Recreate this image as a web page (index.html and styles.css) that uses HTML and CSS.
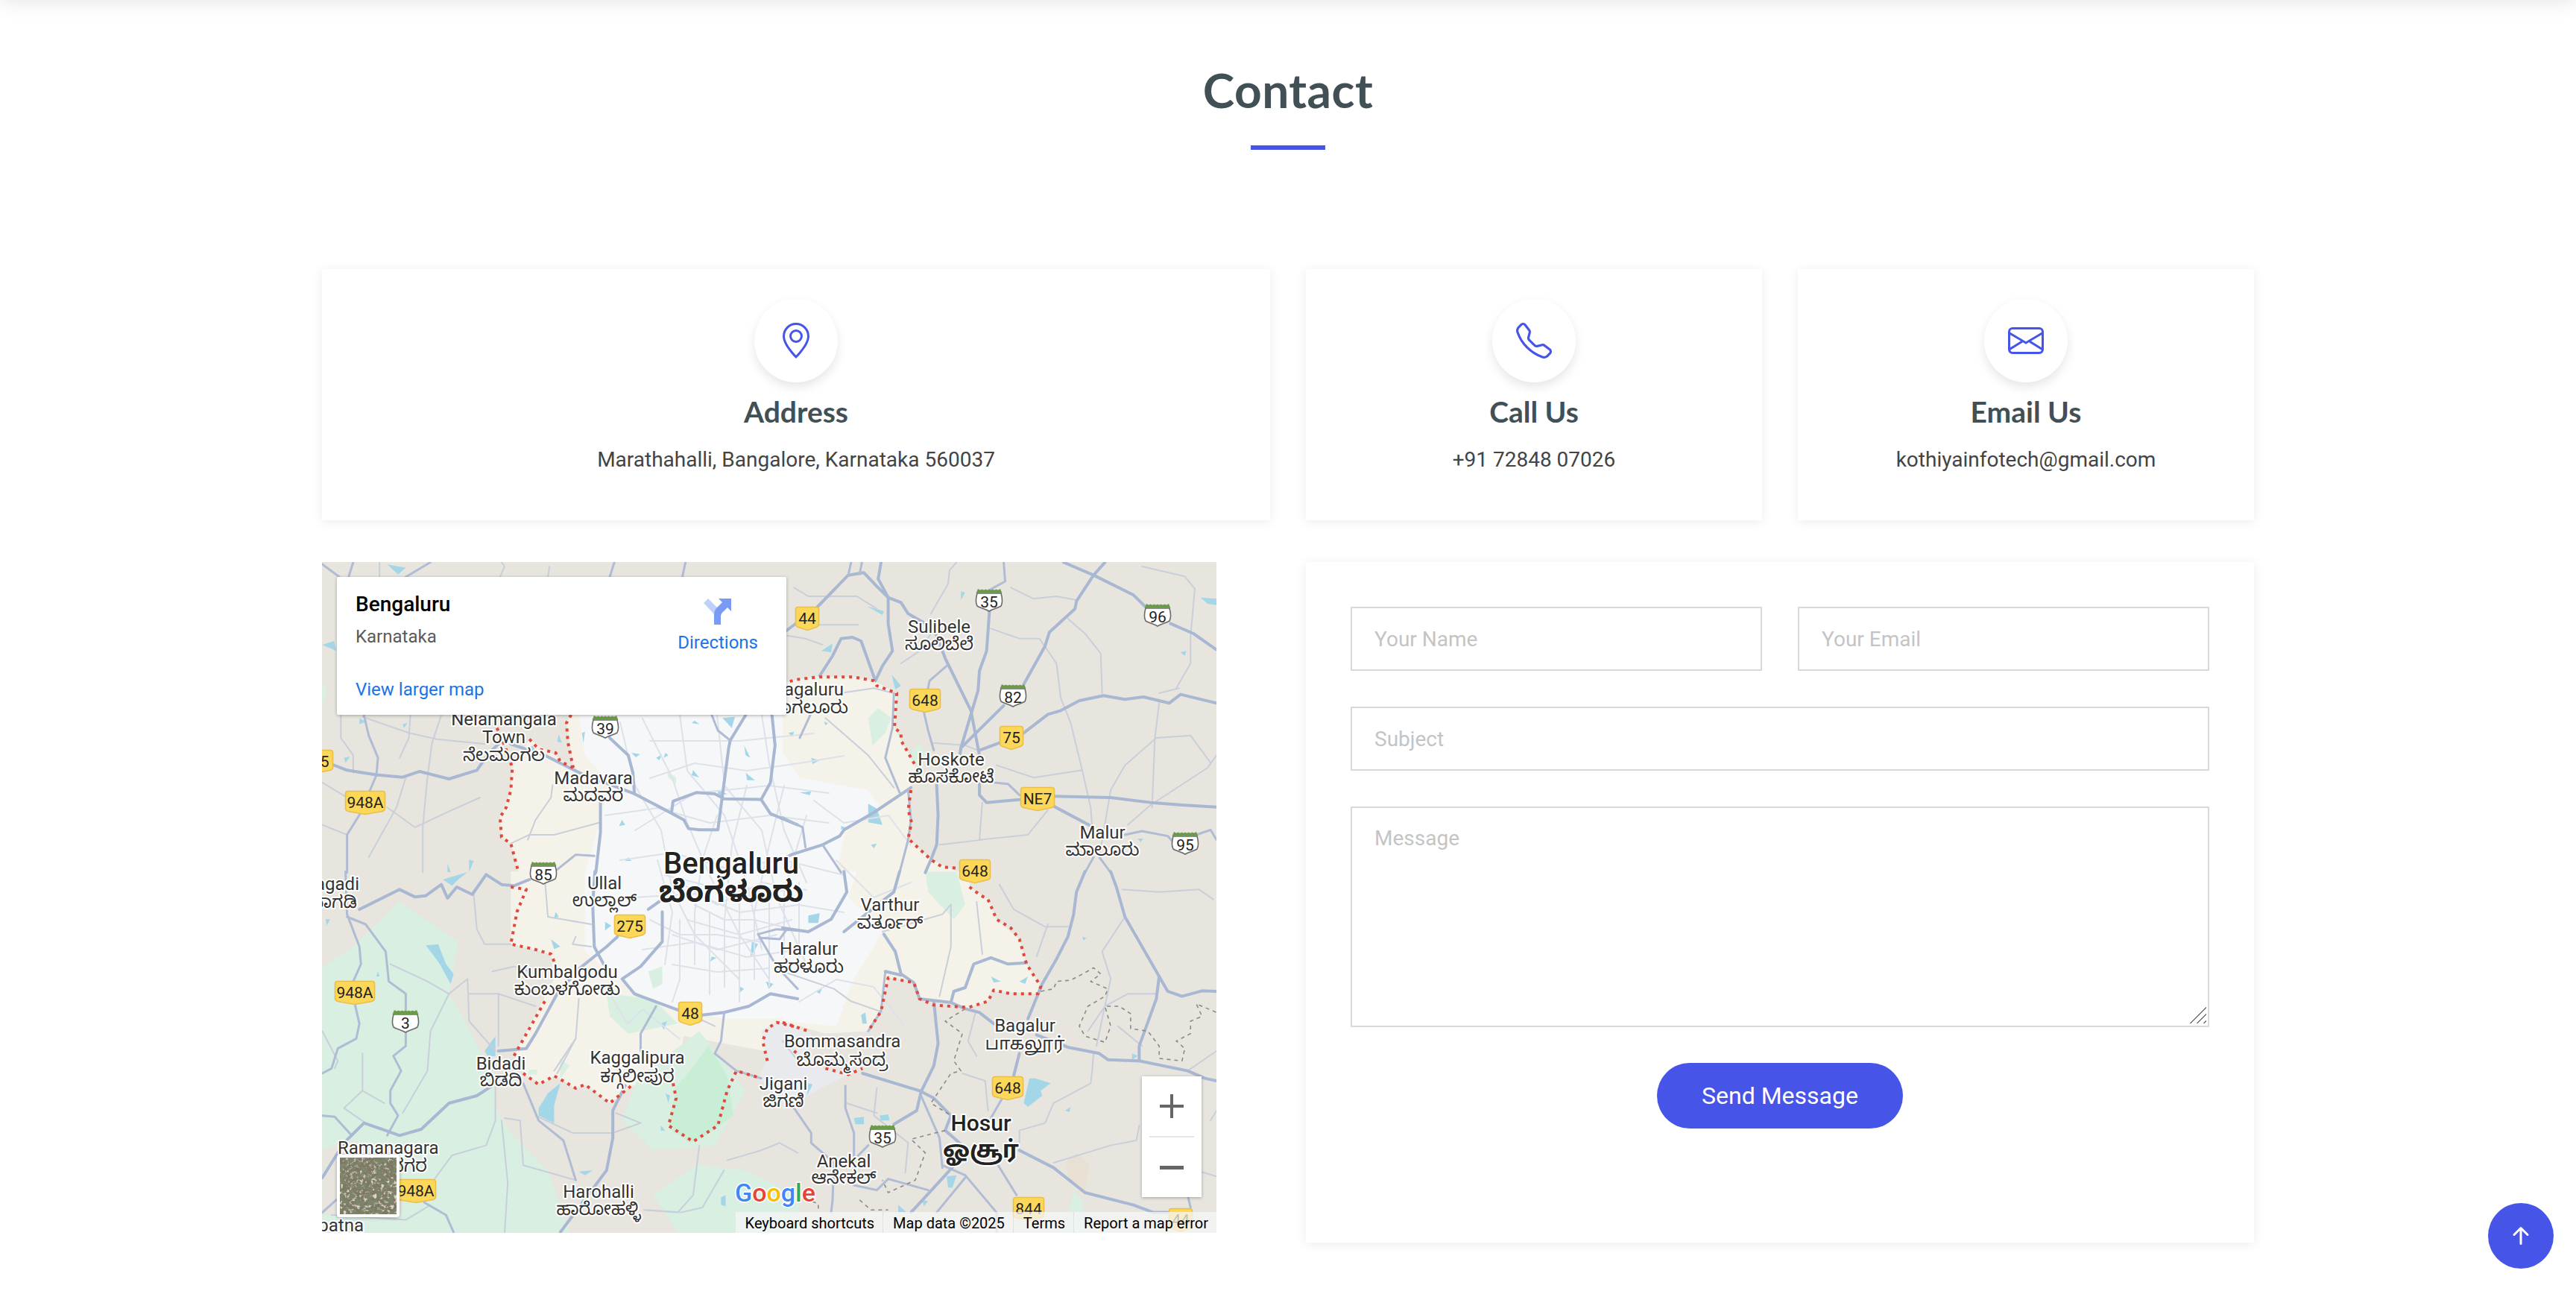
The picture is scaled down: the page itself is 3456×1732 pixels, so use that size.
FILE: index.html
```html
<!DOCTYPE html>
<html lang="en">
<head>
    <meta charset="UTF-8">
    <title>Contact</title>
    <link rel="stylesheet" href="styles.css">
</head>
<body>
    <div class="topbar"></div>
    <section class="contact">
        <div class="section-title">
            <h2>Contact</h2>
        </div>
        <div class="info-row">
            <div class="info-box">
                <div class="icon-circle">
                    <svg width="48" height="48" viewBox="0 0 16 16" fill="currentColor"><path d="M12.166 8.94c-.524 1.062-1.234 2.12-1.96 3.07A31.493 31.493 0 0 1 8 14.58a31.481 31.481 0 0 1-2.206-2.57c-.726-.95-1.436-2.008-1.96-3.07C3.304 7.867 3 6.862 3 6a5 5 0 0 1 10 0c0 .862-.305 1.867-.834 2.94zM8 16s6-5.686 6-10A6 6 0 0 0 2 6c0 4.314 6 10 6 10z"/><path d="M8 8a2 2 0 1 1 0-4 2 2 0 0 1 0 4zm0 1a3 3 0 1 0 0-6 3 3 0 0 0 0 6z"/></svg>
                </div>
                <h3>Address</h3>
                <p>Marathahalli, Bangalore, Karnataka 560037</p>
            </div>
            <div class="info-box">
                <div class="icon-circle">
                    <svg width="48" height="48" viewBox="0 0 16 16" fill="currentColor"><path d="M3.654 1.328a.678.678 0 0 0-1.015-.063L1.605 2.3c-.483.484-.661 1.169-.45 1.77a17.568 17.568 0 0 0 4.168 6.608 17.569 17.569 0 0 0 6.608 4.168c.601.211 1.286.033 1.77-.45l1.034-1.034a.678.678 0 0 0-.063-1.015l-2.307-1.794a.678.678 0 0 0-.58-.122l-2.19.547a1.745 1.745 0 0 1-1.657-.459L5.482 8.062a1.745 1.745 0 0 1-.46-1.657l.548-2.19a.678.678 0 0 0-.122-.58L3.654 1.328zM1.884.511a1.745 1.745 0 0 1 2.612.163L6.29 2.98c.329.423.445.974.315 1.494l-.547 2.19a.678.678 0 0 0 .178.643l2.457 2.457a.678.678 0 0 0 .644.178l2.189-.547a1.745 1.745 0 0 1 1.494.315l2.306 1.794c.829.645.905 1.87.163 2.611l-1.034 1.034c-.74.74-1.846 1.065-2.877.702a18.634 18.634 0 0 1-7.01-4.42 18.634 18.634 0 0 1-4.42-7.009c-.362-1.03-.037-2.137.703-2.877L1.885.511z"/></svg>
                </div>
                <h3>Call Us</h3>
                <p>+91 72848 07026</p>
            </div>
            <div class="info-box">
                <div class="icon-circle">
                    <svg width="48" height="48" viewBox="0 0 16 16" fill="currentColor"><path d="M0 4a2 2 0 0 1 2-2h12a2 2 0 0 1 2 2v8a2 2 0 0 1-2 2H2a2 2 0 0 1-2-2V4Zm2-1a1 1 0 0 0-1 1v.217l7 4.2 7-4.2V4a1 1 0 0 0-1-1H2Zm13 2.383-4.708 2.825L15 11.105V5.383Zm-.034 6.876-5.64-3.471L8 9.583l-1.326-.795-5.64 3.47A1 1 0 0 0 2 13h12a1 1 0 0 0 .966-.741ZM1 11.105l4.708-2.897L1 5.383v5.722Z"/></svg>
                </div>
                <h3>Email Us</h3>
                <p>kothiyainfotech@gmail.com</p>
            </div>
        </div>

        <div class="lower-row">
            <!-- Map -->
            <div class="map">
                <svg class="map-canvas" width="1200" height="900" viewBox="0 0 1200 900">
                    <defs>
                        <path id="sh2" d="M-12-15.5H12Q15.5-15.5 15.5-12V8Q15.5 10 12 11.5L0 15.5-12 11.5Q-15.5 10-15.5 8V-12Q-15.5-15.5-12-15.5Z"/>
                        <path id="sh3" d="M-17-15.5H17Q20.5-15.5 20.5-12V8Q20.5 10 17 11.5L0 15.5-17 11.5Q-20.5 10-20.5 8V-12Q-20.5-15.5-17-15.5Z"/>
                        <path id="sh4" d="M-19-15.5H19Q22.5-15.5 22.5-12V8Q22.5 10 19 11.5L0 15.5-19 11.5Q-22.5 10-22.5 8V-12Q-22.5-15.5-19-15.5Z"/>
                        <path id="sh5" d="M-23-15.5H23Q26.5-15.5 26.5-12V8Q26.5 10 23 11.5L0 15.5-23 11.5Q-26.5 10-26.5 8V-12Q-26.5-15.5-23-15.5Z"/>
                        <g id="shw">
                            <path fill="#fff" stroke="#6b6b6b" stroke-width="1.6" d="M-16-9H16C18-2 18.5 3 16 8 12 11 5 11.500 0 15 -5 11.500-12 11-16 8-18.500 3-18-2-16-9Z"/>
                            <path fill="#6b9a4a" d="M-17.500-9-15-15Q-12-12.500-9.500-14.500-7-12.500-4.500-14.500-2-12.500 0-14.500 2-12.500 4.500-14.500 7-12.500 9.500-14.500 12-12.500 15-15L17.500-9Z"/>
                        </g>
                    </defs>

                    <rect class="land" width="1200" height="900"/>

                    <!-- fills, top left -->
                    <g transform="translate(-12,-4) scale(.4146,.3333)">
                        <polygon class="cream" points="835,627 820,660 842,840 770,780 700,725 645,840 640,930 605,1040 610,1120 640,1145 665,1262 1568,1262 1568,627"/>
                        <polygon class="urban" points="860,627 880,790 960,900 930,1050 880,1262 1568,1262 1568,627"/>
                        <polygon class="park-light" points="30,500 45,520 40,570 30,580"/>
                        <polygon class="park-light" points="1145,855 1175,880 1175,905 1150,880"/>
                        <path class="water" d="M240 22 300 35 275 62ZM30 345 75 370 68 330ZM150 640 170 655 150 665ZM290 665 305 660 295 680ZM100 800 120 795 105 820ZM795 705 805 740 790 735ZM870 700 880 695 875 740ZM505 1210 520 1215 505 1260ZM435 1225 445 1260 435 1260ZM1030 780 1058 785 1045 798ZM1110 800 1130 785 1120 810ZM1235 650 1250 665 1225 660ZM1325 640 1365 635 1355 680ZM1395 750 1415 800 1400 790ZM1230 850 1250 880 1225 870ZM1400 860 1430 890 1405 890ZM1310 930 1340 945 1310 955ZM1000 1050 1010 1070 990 1075ZM1140 780 1150 790 1135 800ZM710 750 720 770 700 765ZM1020 1200 1030 1215 1010 1215Z"/>
                    </g>
                    <!-- fills, top right -->
                    <g transform="translate(618,-4) scale(.3827,.3333)">
                        <polygon class="cream" points="0,500 50,485 120,472 250,475 320,490 400,540 392,680 415,730 465,830 450,930 440,1010 452,1060 440,1125 520,1210 620,1262 0,1262"/>
                        <polygon class="urban" points="0,780 60,880 200,910 300,930 350,1010 220,1090 190,1262 0,1262"/>
                        <polygon class="park-light" points="300,640 335,600 380,640 360,700 315,750"/>
                        <polygon class="park-light" points="445,790 480,740 505,790 470,830"/>
                        <path class="water" d="M295 190 355 210 350 225ZM135 370 175 340 170 375ZM382 465 415 510 395 525ZM625 130 640 135 625 165ZM1465 155 1521 160 1521 185 1490 180ZM1395 375 1415 370 1410 390ZM145 655 160 660 150 670ZM20 700 40 695 35 715ZM100 800 130 810 105 825ZM60 940 100 935 95 950ZM300 985 330 1005 350 1070 300 1060ZM205 1075 220 1080 205 1090ZM310 1150 330 1145 320 1165ZM1245 1125 1265 1125 1255 1140Z"/>
                    </g>
                    <!-- fills, bottom left -->
                    <g transform="translate(-12,416) scale(.4146,.3333)">
                        <polygon class="park-light" points="30,380 130,300 280,120 470,280 440,490 500,620 540,720 590,860 590,950 640,1050 760,1200 830,1450 30,1450"/>
                        <polygon class="park-light" points="1100,1300 1240,1180 1400,1200 1568,1300 1568,1450 1180,1450"/>
                        <polygon class="land" points="30,1120 120,1080 250,1110 300,1290 280,1380 30,1380"/>
                        <polygon class="cream" points="640,-2 640,290 770,330 780,430 650,740 680,810 740,855 780,820 850,870 880,855 960,930 1030,860 1170,850 1200,660 1460,720 1568,620 1568,-2"/>
                        <polygon class="urban" points="880,-2 880,320 1000,440 1100,530 1330,590 1480,590 1568,580 1568,-2"/>
                        <polygon class="park-light" points="950,490 1100,510 1180,610 1020,650 960,580"/>
                        <polygon class="park-light" points="1050,830 1250,640 1400,880 1300,1100 1100,1120 1000,1000"/>
                        <polygon class="park" points="1170,870 1220,800 1280,700 1340,820 1360,980 1270,1060 1220,1090 1150,1030 1170,900"/>
                        <polygon class="grey-zone" points="1450,640 1500,600 1568,620 1568,960 1440,830 1470,750"/>
                        <polygon class="park-light" points="1085,400 1130,380 1130,450 1100,470"/>
                        <polygon class="park-light" points="800,750 830,780 800,830"/>
                        <polygon class="park-light" points="700,795 725,795 725,815 695,815"/>
                        <path class="water" d="M420 30 500 0 470 30 450 55ZM40 190 55 190 45 215ZM365 295 405 290 430 370 455 410 445 450 410 370ZM210 400 215 420 205 420ZM555 720 590 660 590 740 565 740ZM770 270 800 300 780 310ZM730 950 760 890 800 850 780 940 780 1010 730 980ZM860 1205 905 1200 880 1220ZM1125 610 1145 600 1135 635ZM1320 1310 1335 1300 1335 1345 1320 1340ZM1420 280 1440 290 1415 345ZM1290 340 1305 345 1285 360ZM1380 460 1395 470 1380 485ZM1465 440 1490 450 1475 470ZM945 200 965 215 945 235ZM785 160 795 180 780 185ZM1140 890 1155 900 1150 930ZM1125 1020 1140 1040 1125 1040Z"/>
                    </g>
                    <!-- fills, bottom right -->
                    <g transform="translate(618,416) scale(.3827,.3333)">
                        <polygon class="cream" points="0,-2 655,-2 655,60 720,110 750,190 830,270 855,370 905,460 895,490 730,480 720,520 650,545 480,510 460,440 370,425 340,560 300,640 150,650 0,600"/>
                        <polygon class="urban" points="0,-2 260,-2 230,100 350,240 240,450 190,620 0,600"/>
                        <polygon class="park-light" points="500,-2 610,-2 640,130 600,190 510,80"/>
                        <polygon class="grey-zone" points="0,600 100,650 90,720 140,790 230,815 150,860 0,960"/>
                        <polygon class="tan" points="990,1170 1030,1130 1075,1180 1060,1290 1010,1250"/>
                        <polygon class="park-light" points="990,1450 1020,1285 1050,1320 1060,1450"/>
                        <polygon class="park-light" points="0,1330 60,1340 40,1450 0,1450"/>
                        <path class="water" d="M90 175 130 165 125 205 90 205ZM115 480 140 465 130 490ZM275 575 290 565 295 610 280 610ZM730 420 765 440 740 445ZM830 440 860 420 850 450ZM865 830 885 830 940 850 905 880 910 900 860 945 845 930ZM1050 260 1065 265 1055 275ZM990 960 1010 945 1005 965ZM250 990 285 985 285 1015 255 1015ZM340 980 370 975 375 1000 345 1000ZM20 380 35 390 20 400ZM575 1225 610 1220 595 1270 580 1270ZM405 1340 435 1370 405 1370ZM490 1320 510 1325 495 1345ZM90 850 105 855 85 900ZM1225 730 1245 740 1225 755Z"/>
                    </g>

                    <!-- city street lines -->
                    <g class="st">
                        <polyline points="400,215 420,300 455,360 470,440 500,500 560,560"/>
                        <polyline points="430,210 470,290 490,350 520,420 560,500 600,560"/>
                        <polyline points="480,205 490,280 540,340 570,430 590,520"/>
                        <polyline points="530,205 540,300 590,360 610,450 650,540"/>
                        <polyline points="590,205 600,270 620,360 650,430"/>
                        <polyline points="380,340 450,330 520,350 600,340 680,350"/>
                        <polyline points="400,400 470,390 540,410 620,400 700,420"/>
                        <polyline points="420,450 500,445 560,470 640,460 700,470"/>
                        <polyline points="430,520 500,510 570,530 640,520"/>
                        <polyline points="440,290 500,270 570,280 640,270 700,260"/>
                        <polyline points="480,480 480,560 470,590"/>
                        <polyline points="520,470 520,580"/>
                        <polyline points="560,430 560,590"/>
                        <polyline points="600,440 600,570"/>
                        <polyline points="640,430 640,540"/>
                        <polyline points="460,420 500,430 540,440 580,450 620,440"/>
                        <polyline points="500,460 540,480 580,480 620,490"/>
                        <polyline points="440,480 480,500 530,500 590,510"/>
                        <polyline points="470,540 530,550 600,545"/>
                        <polyline points="660,320 700,350 760,340 790,380"/>
                        <polyline points="690,400 740,450 790,430"/>
                        <polyline points="640,590 690,560 740,570 780,620"/>
                        <polyline points="380,570 410,620 430,600 480,640"/>
                        <polyline points="440,240 560,240 660,230"/>
                        <polyline points="420,360 500,310 600,300 680,310"/>
                        <polyline points="500,540 500,470 510,400 530,340"/>
                        <polyline points="540,570 540,480 550,380 570,300"/>
                        <polyline points="580,560 580,470 600,380 620,300"/>
                        <polyline points="620,540 620,440 650,340"/>
                        <polyline points="460,540 470,470 450,400"/>
                        <polyline points="480,430 530,460 590,430 650,440"/>
                        <polyline points="470,500 530,520 610,500"/>
                        <polyline points="490,480 560,500 630,480"/>
                    </g>

                    <!-- minor roads, top left -->
                    <g class="q" transform="translate(-12,-4) scale(.4146,.3333)">
                        <polyline class="r3" points="215,13 215,72"/>
                        <polyline class="r3" points="605,72 620,30 610,13"/>
                        <polyline class="r3" points="760,72 765,30"/>
                        <polyline class="r3" points="90,630 90,720 130,790 130,860"/>
                        <polyline class="r3" points="160,635 310,700 400,725 560,745"/>
                        <polyline class="r3" points="315,628 310,720 280,800"/>
                        <polyline class="r3" points="415,628 385,740 370,880 355,1080 355,1262"/>
                        <polyline class="r3" points="30,900 110,960"/>
                        <polyline class="r3" points="240,1000 330,1080 450,1010 540,960"/>
                        <polyline class="r3" points="30,1070 110,1110"/>
                        <polyline class="r3" points="300,880 270,1000 180,1200"/>
                        <polyline class="r3" points="930,1060 780,1110 700,1110 640,1145"/>
                        <polyline class="r3" points="775,910 770,960 720,1050 695,1130"/>
                    </g>
                    <!-- minor roads, top right -->
                    <g class="q" transform="translate(618,-4) scale(.3827,.3333)">
                        <polyline class="r3" points="610,13 585,45 580,100 520,220"/>
                        <polyline class="r3" points="730,280 830,320 900,320 960,420 975,560 1010,660 1050,850 1080,1000 1085,1080"/>
                        <polyline class="r3" points="1000,240 1060,300 1115,380 1120,540"/>
                        <polyline class="r3" points="800,115 880,160 960,150 1030,165"/>
                        <polyline class="r3" points="1260,30 1410,70 1445,120 1430,310 1430,420 1380,520"/>
                        <polyline class="r3" points="1320,580 1305,720 1295,1000"/>
                        <polyline class="r3" points="1310,720 1200,830 1150,930 1110,1200"/>
                        <polyline class="r3" points="1521,790 1490,840 1290,990 1210,1070"/>
                        <polyline class="r3" points="750,830 880,880 1050,850"/>
                        <polyline class="r3" points="700,980 690,1130 860,1110 930,1010"/>
                        <polyline class="r3" points="1310,720 1430,710 1500,820"/>
                        <polyline class="r3" points="130,265 265,265"/>
                        <polyline class="r3" points="40,115 90,150 260,150 330,200"/>
                        <polyline class="r3" points="0,305 80,320 140,345"/>
                        <polyline class="r3" points="530,740 640,750 685,770"/>
                        <polyline class="r3" points="415,420 480,370 520,300"/>
                        <polyline class="r3" points="150,640 300,790 390,920"/>
                        <polyline class="r3" points="200,540 320,520 390,540"/>
                        <polyline class="r3" points="550,1150 700,1130"/>
                        <polyline class="r3" points="1320,540 1390,520"/>
                    </g>
                    <!-- minor roads, bottom left -->
                    <g class="q" transform="translate(-12,416) scale(.4146,.3333)">
                        <polyline class="r3" points="250,370 370,440 440,490 380,640 370,800 290,970"/>
                        <polyline class="r3" points="440,490 500,430 505,600 590,720"/>
                        <polyline class="r3" points="505,490 600,490 720,540"/>
                        <polyline class="r3" points="580,400 650,380 700,400"/>
                        <polyline class="r3" points="600,490 600,700"/>
                        <polyline class="r3" points="590,860 590,1000 560,1100 450,1140 390,1240"/>
                        <polyline class="r3" points="620,990 670,1000 680,1180 850,1240"/>
                        <polyline class="r3" points="720,980 840,1050 970,1050 1060,1010 980,970"/>
                        <polyline class="r3" points="1250,1100 1230,1300 1180,1370 1070,1360"/>
                        <polyline class="r3" points="1340,1160 1450,1120 1510,1090 1568,1130"/>
                        <polyline class="r3" points="850,670 790,810"/>
                        <polyline class="r3" points="30,640 80,760 70,790"/>
                        <polyline class="r3" points="160,730 160,880 100,950 170,1010"/>
                        <polyline class="r3" points="230,930 160,880"/>
                        <polyline class="r3" points="520,90 530,230 555,290 640,290"/>
                        <polyline class="r3" points="750,30 760,180 900,210"/>
                        <polyline class="r3" points="850,260 840,290 900,300"/>
                        <polyline class="r3" points="610,1000 630,1250 620,1450"/>
                        <polyline class="r3" points="860,510 850,670 780,800"/>
                        <polyline class="r3" points="60,1380 300,1400 380,1340"/>
                        <polyline class="r3" points="1080,1360 1190,1370 1260,1350 1330,1200"/>
                        <polyline class="r3" points="1180,550 1300,620"/>
                    </g>
                    <!-- minor roads, bottom right -->
                    <g class="q" transform="translate(618,416) scale(.3827,.3333)">
                        <polyline class="r3" points="350,240 560,170 590,130 590,300 550,500"/>
                        <polyline class="r3" points="680,120 700,330"/>
                        <polyline class="r3" points="760,50 810,150 920,220 1000,220"/>
                        <polyline class="r3" points="930,210 890,340"/>
                        <polyline class="r3" points="1200,180 1120,320 1150,430 1100,700"/>
                        <polyline class="r3" points="1190,70 1320,80 1460,70 1510,110"/>
                        <polyline class="r3" points="1310,490 1210,490 1130,540 1070,640"/>
                        <polyline class="r3" points="1175,620 1260,700"/>
                        <polyline class="r3" points="1090,730 1085,800 1080,850 950,930 920,1010 830,1040 830,1110"/>
                        <polyline class="r3" points="630,810 710,840 720,960"/>
                        <polyline class="r3" points="1420,800 1521,720"/>
                        <polyline class="r3" points="675,570 650,680 680,740"/>
                        <polyline class="r3" points="1250,1020 1240,1080 1150,1100 950,1170"/>
                        <polyline class="r3" points="330,870 320,980 440,1090 430,1210"/>
                        <polyline class="r3" points="225,930 330,970"/>
                        <polyline class="r3" points="0,400 180,470 240,520 340,560"/>
                        <polyline class="r3" points="0,680 60,770"/>
                        <polyline class="r3" points="1450,1200 1521,1225"/>
                        <polyline class="r3" points="1500,1000 1521,960"/>
                    </g>

                    <!-- main roads, top left -->
                    <g class="q" transform="translate(-12,-4) scale(.4146,.3333)">
                        <polyline class="r2" points="29,20 85,72"/>
                        <polyline class="r2" points="130,13 115,72"/>
                        <polyline class="r2" points="380,13 300,72"/>
                        <polyline class="r2" points="975,13 960,72"/>
                        <polyline class="r2" points="1205,13 1195,72"/>
                        <polyline class="r2" points="165,630 180,710 210,800 205,870 150,1030 110,1110 110,1262"/>
                        <polyline class="r1" points="57,825 110,850 200,868 290,878 345,855 440,885 530,850 570,780 600,745"/>
                        <polyline class="r1" points="640,745 750,790 870,865 1040,945 1140,1010 1200,1050 1215,1085 1250,1090 1310,1090 1345,760 1350,730 1400,628"/>
                        <polyline class="r1" points="1160,1020 1165,975 1240,940 1300,945 1330,965 1450,968 1480,1025 1568,1070"/>
                        <polyline class="r1" points="1485,627 1495,750 1480,900 1450,968"/>
                        <polyline class="r2" points="1290,627 1310,690 1350,730"/>
                        <polyline class="r1" points="930,950 930,1100 915,1262"/>
                        <polyline class="r1" points="960,720 1020,790 1035,860 1040,945"/>
                        <polyline class="r2" points="790,1250 850,1190 910,1195"/>
                        <polyline class="red" points="835,627 820,660 825,740 842,840"/>
                        <polyline class="red" points="595,680 620,750 645,840 640,930 625,1000 605,1040 610,1120 640,1145 665,1262"/>
                        <polyline class="red" points="700,725 730,765 785,780 800,815 842,840"/>
                    </g>
                    <!-- main roads, top right -->
                    <g class="q" transform="translate(618,-4) scale(.3827,.3333)">
                        <polyline class="r1" points="0,300 120,195 230,65 285,55 330,110 370,155 415,175 440,220 530,280 570,400 660,610 690,790"/>
                        <polyline class="r2" points="240,13 230,65"/>
                        <polyline class="r2" points="278,13 270,60"/>
                        <polyline class="r1" points="345,13 335,80 370,155 370,260 385,370 350,430 325,490 275,330 245,315 205,320 175,390 130,470"/>
                        <polyline class="r2" points="775,13 780,90 725,125"/>
                        <polyline class="r1" points="725,210 715,370 690,450 685,530 625,760 620,800"/>
                        <polyline class="r1" points="985,13 1090,65 1230,145 1270,190"/>
                        <polyline class="r1" points="1360,260 1440,300 1521,365"/>
                        <polyline class="r1" points="1130,13 1090,65 1030,170 1025,200 935,295 920,350 845,505"/>
                        <polyline class="r1" points="775,590 625,760"/>
                        <polyline class="r2" points="575,430 515,490 510,520"/>
                        <polyline class="r2" points="495,615 510,690 530,770"/>
                        <polyline class="r1" points="690,770 760,740"/>
                        <polyline class="r1" points="845,700 930,625 975,610 1040,570 1125,550 1200,565 1265,555 1355,580 1395,545 1521,580"/>
                        <polyline class="r1" points="450,920 320,1020 215,1090 200,1115 140,1150 30,1190 0,1210"/>
                        <polyline class="r2" points="745,900 790,905 830,950"/>
                        <polyline class="r1" points="690,900 690,950 715,980 830,968"/>
                        <polyline class="r1" points="950,955 1150,960 1290,980 1400,990 1521,998"/>
                        <polyline class="r1" points="950,995 1090,1080"/>
                        <polyline class="r2" points="1200,1110 1260,1095 1350,1115 1370,1140"/>
                        <polyline class="r2" points="1450,1110 1500,1090 1521,1130"/>
                        <polyline class="r1" points="540,910 545,1030 540,1150 520,1210 500,1262"/>
                        <polyline class="r2" points="440,930 450,1050 440,1130 410,1262"/>
                        <polyline class="r2" points="0,1040 70,1080 80,1160"/>
                        <polyline class="r2" points="140,1150 205,1262"/>
                        <polyline class="r2" points="390,540 385,680 360,800 410,940"/>
                        <polyline class="r2" points="1090,1200 1060,1262"/>
                        <polyline class="r2" points="1110,1200 1150,1262"/>
                        <polyline class="r2" points="100,620 60,720"/>
                        <polyline class="red" points="0,500 50,485 120,475 250,475 320,490 330,510 400,540 392,680 415,700 415,730 465,830"/>
                        <polyline class="red" points="450,930 440,1010 452,1060 440,1125 520,1210 560,1240 620,1245"/>
                    </g>
                    <!-- main roads, bottom left -->
                    <g class="q" transform="translate(-12,416) scale(.4146,.3333)">
                        <polyline class="r2" points="105,-2 110,170 150,300 155,370 130,440"/>
                        <polyline class="r2" points="135,530 150,610 140,670 80,710 60,790 30,810"/>
                        <polyline class="r2" points="110,180 170,210 235,320 245,440 300,490 300,560"/>
                        <polyline class="r2" points="300,645 300,700 260,740 285,800 250,880 250,930 275,980 240,1060"/>
                        <polyline class="r1" points="150,150 280,70 330,100 365,95 415,50 435,105 465,60 515,90 560,10 610,50 650,55 700,30"/>
                        <polyline class="r2" points="30,980 70,985 125,1060"/>
                        <polyline class="r1" points="30,1230 100,1090 165,1010 280,1060 350,1035 440,930 530,900 580,860"/>
                        <polyline class="r1" points="600,720 690,710 720,650 790,490 860,390 950,300 985,260"/>
                        <polyline class="r1" points="912,-2 905,130 910,300 940,370"/>
                        <polyline class="r1" points="1130,160 1130,280 1060,380 1000,430 1040,490 1180,555"/>
                        <polyline class="r1" points="1085,150 1130,110"/>
                        <polyline class="r1" points="1260,575 1330,565 1410,540 1480,490 1568,510"/>
                        <polyline class="r2" points="1110,540 1060,650 1060,720"/>
                        <polyline class="r2" points="1330,570 1320,680 1300,730 1370,800 1450,830"/>
                        <polyline class="r2" points="1440,250 1500,380 1568,470"/>
                        <polyline class="r2" points="1440,250 1500,230 1568,235"/>
                        <polyline class="r2" points="1450,265 1510,270 1530,235"/>
                        <polyline class="r1" points="1010,860 970,960 970,1070 950,1200 800,1450"/>
                        <polyline class="r2" points="360,1330 430,1380 455,1450"/>
                        <polyline class="r2" points="680,850 730,1000 810,1080 850,1240"/>
                        <polyline class="r2" points="30,1370 75,1320"/>
                        <polyline class="red" points="640,60 690,70 660,160 640,290 715,310 770,330 780,360"/>
                        <polyline class="red" points="750,520 650,740"/>
                        <polyline class="red" points="680,810 730,855 780,820 850,870 880,855 960,930 1030,860"/>
                        <polyline class="red" points="1165,850 1175,910 1150,1020 1230,1085 1310,1020 1340,880 1370,800 1450,830"/>
                        <polyline class="red" points="1470,760 1455,680 1470,630 1500,605 1568,625"/>
                    </g>
                    <!-- main roads, bottom right -->
                    <g class="q" transform="translate(618,416) scale(.3827,.3333)">
                        <polyline class="r1" points="410,-2 390,80 215,240"/>
                        <polyline class="r1" points="215,-2 225,80 170,190 90,240 0,225"/>
                        <polyline class="r1" points="355,250 395,320 415,410 460,445 480,510 590,525 640,550 690,565 740,610"/>
                        <polyline class="r1" points="890,655 1000,705 1110,730 1140,755 1250,760 1420,800 1480,830 1521,840"/>
                        <polyline class="r2" points="360,400 345,560 300,640"/>
                        <polyline class="r1" points="360,400 415,415"/>
                        <polyline class="r1" points="590,525 600,480 640,465 670,370 730,345 790,370 855,365"/>
                        <polyline class="r1" points="1060,-2 1030,80 1020,170 1000,260 960,350 910,450 860,590"/>
                        <polyline class="r1" points="830,730 810,820"/>
                        <polyline class="r2" points="770,910 730,990"/>
                        <polyline class="r1" points="1150,-2 1170,60 1200,180 1260,300 1320,420 1310,510 1250,700 1250,760"/>
                        <polyline class="r1" points="1320,420 1350,480 1400,500 1470,478 1521,480"/>
                        <polyline class="r1" points="530,520 545,690 530,780 485,885 470,960 390,1015"/>
                        <polyline class="r2" points="485,900 550,1070 560,1190"/>
                        <polyline class="r1" points="280,810 480,880 530,910 590,980 570,1040 640,1110"/>
                        <polyline class="r2" points="40,950 100,1050 100,1090 180,1170 175,1320 170,1370"/>
                        <polyline class="r2" points="220,860 220,950 250,1050 250,1200"/>
                        <polyline class="r2" points="300,1100 240,1170"/>
                        <polyline class="r1" points="830,1120 950,1190 1060,1290 1230,1340 1300,1370 1350,1370"/>
                        <polyline class="r2" points="750,1170 820,1300"/>
                        <polyline class="r2" points="560,1180 640,1220 750,1370 750,1450"/>
                        <polyline class="r1" points="610,1170 450,1370"/>
                        <polyline class="r2" points="640,1230 540,1370"/>
                        <polyline class="r2" points="250,1260 330,1280 370,1235 510,1280"/>
                        <polyline class="r2" points="1420,1300 1430,1350"/>
                        <polyline class="red" points="655,60 690,90 720,110 750,190 800,225 830,270 855,370 905,460 895,490 800,490 740,475 720,520 650,545 530,535 480,510 460,445 370,425 345,560 300,640"/>
                        <polyline class="red" points="0,605 90,640"/>
                        <polyline class="red" points="40,720 50,730"/>
                        <polyline class="red" points="150,790 230,815 280,790"/>
                        <polyline class="dash" points="905,480 950,470 960,440 1010,435 1060,405 1090,385 1115,410 1080,440 1140,470 1130,500 1070,540 1040,620 1060,660 1130,685 1150,620 1130,540 1180,540 1220,570 1220,630 1280,640 1320,700 1320,750 1400,760 1410,710 1380,680 1430,650 1430,600 1470,580 1450,530 1521,565"/>
                        <polyline class="dash" points="640,550 570,600 630,650 600,760 625,800 590,810 520,930 590,980"/>
                        <polyline class="dash" points="570,1040 450,1075 500,1130 465,1240 370,1290 350,1240"/>
                        <polyline class="dash" points="270,1320 310,1360 370,1360"/>
                        <polyline class="dash" points="80,1315 125,1335 125,1370"/>
                    </g>

                    <!-- town names -->
                    <g class="lbl">
                        <text x="244" y="219">Nelamangala</text>
                        <text x="244" y="243">Town</text>
                        <text x="244" y="267" class="alt">ನೆಲಮಂಗಲ</text>
                        <text x="364" y="298">Madavara</text>
                        <text x="364" y="321" class="alt">ಮದವರ</text>
                        <text x="828" y="95">Sulibele</text>
                        <text x="828" y="118" class="alt">ಸೂಲಿಬೆಲೆ</text>
                        <text x="700" y="179" class="end">Bagaluru</text>
                        <text x="706" y="203" class="end alt">ಬಾಗಲೂರು</text>
                        <text x="844" y="273">Hoskote</text>
                        <text x="844" y="296" class="alt">ಹೊಸಕೋಟೆ</text>
                        <text x="1047" y="371">Malur</text>
                        <text x="1047" y="394" class="alt">ಮಾಲೂರು</text>
                        <text x="379" y="439">Ullal</text>
                        <text x="379" y="462" class="alt">ಉಲ್ಲಾಲ್</text>
                        <text x="50" y="440" class="end">Magadi</text>
                        <text x="47" y="464" class="end alt">ಮಾಗಡಿ</text>
                        <text x="329" y="558">Kumbalgodu</text>
                        <text x="329" y="581" class="alt">ಕುಂಬಳಗೋಡು</text>
                        <text x="240" y="681">Bidadi</text>
                        <text x="240" y="703" class="alt">ಬಿಡದಿ</text>
                        <text x="423" y="673">Kaggalipura</text>
                        <text x="423" y="698" class="alt">ಕಗ್ಗಲೀಪುರ</text>
                        <text x="21" y="794" class="start">Ramanagara</text>
                        <text x="141" y="818" class="end alt">ರಾಮನಗರ</text>
                        <text x="56" y="898" class="end">Channapatna</text>
                        <text x="371" y="853">Harohalli</text>
                        <text x="371" y="876" class="alt">ಹಾರೋಹಳ್ಳಿ</text>
                        <text x="762" y="468">Varthur</text>
                        <text x="762" y="492" class="alt">ವರ್ತೂರ್</text>
                        <text x="653" y="527">Haralur</text>
                        <text x="653" y="551" class="alt">ಹರಳೂರು</text>
                        <text x="698" y="651">Bommasandra</text>
                        <text x="698" y="676" class="alt">ಬೊಮ್ಮಸಂದ್ರ</text>
                        <text x="619" y="708">Jigani</text>
                        <text x="619" y="731" class="alt">ಜಿಗಣಿ</text>
                        <text x="943" y="630">Bagalur</text>
                        <text x="943" y="654" class="alt">பாகலூர்</text>
                        <text x="700" y="812">Anekal</text>
                        <text x="700" y="834" class="alt">ಆನೇಕಲ್</text>
                        <text x="884" y="763" class="town">Hosur</text>
                        <text x="884" y="799" class="town-alt">ஓசூர்</text>
                        <text x="549" y="418" class="city">Bengaluru</text>
                        <text x="549" y="456" class="city-alt">ಬೆಂಗಳೂರು</text>
                    </g>

                    <!-- highway shields -->
                    <g class="sh-y">
                        <g transform="translate(651 76)"><use href="#sh2"/><text y="7">44</text></g>
                        <g transform="translate(809 186)"><use href="#sh3"/><text y="7">648</text></g>
                        <g transform="translate(925 236)"><use href="#sh2"/><text y="7">75</text></g>
                        <g transform="translate(960 318)"><use href="#sh4"/><text y="7">NE7</text></g>
                        <g transform="translate(876 415)"><use href="#sh3"/><text y="7">648</text></g>
                        <g transform="translate(58 323)"><use href="#sh5"/><text y="7">948A</text></g>
                        <g transform="translate(-12 268)"><use href="#sh5"/><text x="-2" y="7" class="far">75</text></g>
                        <g transform="translate(413 489)"><use href="#sh3"/><text y="7">275</text></g>
                        <g transform="translate(44 578)"><use href="#sh5"/><text y="7">948A</text></g>
                        <g transform="translate(494 606)"><use href="#sh2"/><text y="7">48</text></g>
                        <g transform="translate(126 844)"><use href="#sh5"/><text y="7">948A</text></g>
                        <g transform="translate(920 706)"><use href="#sh3"/><text y="7">648</text></g>
                        <g transform="translate(948 868)"><use href="#sh3"/><text y="7">844</text></g>
                        <g transform="translate(1152 883)"><use href="#sh2"/><text y="7">44</text></g>
                    </g>
                    <g class="sh-w">
                        <g transform="translate(895 51)"><use href="#shw"/><text y="10">35</text></g>
                        <g transform="translate(1121 71)"><use href="#shw"/><text y="10">96</text></g>
                        <g transform="translate(927 179)"><use href="#shw"/><text y="10">82</text></g>
                        <g transform="translate(1158 377)"><use href="#shw"/><text y="10">95</text></g>
                        <g transform="translate(380 221)"><use href="#shw"/><text y="10">39</text></g>
                        <g transform="translate(297 417)"><use href="#shw"/><text y="10">85</text></g>
                        <g transform="translate(112 616)"><use href="#shw"/><text y="10">3</text></g>
                        <g transform="translate(752 770)"><use href="#shw"/><text y="10">35</text></g>
                    </g>

                    <text class="g-logo" x="554" y="858"><tspan fill="#4285f4">G</tspan><tspan fill="#ea4335">o</tspan><tspan fill="#fbbc05">o</tspan><tspan fill="#4285f4">g</tspan><tspan fill="#34a853">l</tspan><tspan fill="#ea4335">e</tspan></text>
                </svg>

                <div class="place-card">
                    <div class="place-top">
                        <div>
                            <div class="place-name">Bengaluru</div>
                            <div class="place-sub">Karnataka</div>
                        </div>
                        <div class="directions">
                            <svg width="38" height="36" viewBox="0 0 38 36"><path fill="#bfd0fb" d="M0 7 6 1 23 18 17 36H14V22Z"/><path fill="#7a9bf5" d="M14 36V23Q14 16 20 11L25 6 20 1H37V18L32 13 27 18Q23 21 23 25V36Z"/></svg>
                            <span>Directions</span>
                        </div>
                    </div>
                    <div class="larger-map">View larger map</div>
                </div>

                <div class="satellite">
                    <svg width="76" height="76" viewBox="0 0 76 76"><filter id="grain" x="0" y="0" width="100%" height="100%"><feTurbulence type="fractalNoise" baseFrequency=".14" numOctaves="4" seed="7"/><feColorMatrix values="0 0 0 0 .2  0 0 0 0 .23  0 0 0 0 .14  5 0 0 0 -2.2"/></filter><filter id="grain2" x="0" y="0" width="100%" height="100%"><feTurbulence type="fractalNoise" baseFrequency=".22" numOctaves="3" seed="21"/><feColorMatrix values="0 0 0 0 .72  0 0 0 0 .67  0 0 0 0 .56  0 5 0 0 -2.5"/></filter><rect width="76" height="76" fill="#7d7863"/><rect width="76" height="76" filter="url(#grain2)"/><rect width="76" height="76" filter="url(#grain)"/></svg>
                </div>

                <div class="zoom-box">
                    <svg width="80" height="162" viewBox="0 0 80 162"><path fill="#666" d="M38 24h4v14h14v4H42v14h-4V42H24v-4h14zM24 120h32v5H24z"/><path fill="#e6e6e6" d="M10 80h60v2H10z"/></svg>
                </div>

                <div class="attribution">
                    <span>Keyboard shortcuts</span>
                    <span>Map data ©2025</span>
                    <span>Terms</span>
                    <span>Report a map error</span>
                </div>
            </div>

            <!-- Form -->
            <form class="message-form">
                <div class="field-row">
                    <input type="text" placeholder="Your Name">
                    <input type="text" placeholder="Your Email">
                </div>
                <input type="text" placeholder="Subject">
                <div class="message-box">
                    <textarea placeholder="Message"></textarea>
                </div>
                <div class="form-submit">
                    <button type="button">Send Message</button>
                </div>
            </form>
        </div>
    </section>

    <a class="back-to-top">
        <svg width="48" height="48" viewBox="0 0 16 16" fill="currentColor"><path d="M8 12a.5.5 0 0 0 .5-.5V5.707l2.146 2.147a.5.5 0 0 0 .708-.708l-3-3a.5.5 0 0 0-.708 0l-3 3a.5.5 0 1 0 .708.708L7.5 5.707V11.500a.5.5 0 0 0 .5.5z"/></svg>
    </a>
</body>
</html>
```
FILE: styles.css
```css
* {
    box-sizing: border-box;
    margin: 0;
    padding: 0;
}

body {
    font-family: Roboto, sans-serif;
    background-color: #fff;
    color: #444;
    min-height: 1732px;
    overflow-x: hidden;
}

/* header sits above the fold, only its shadow shows */
.topbar {
    height: 60px;
    margin-top: -60px;
    box-shadow: 0 0 30px rgba(0, 0, 0, .12);
}

.contact {
    width: 2592px;
    margin: 0 auto;
}

.section-title {
    text-align: center;
    padding-top: 82px;
    height: 361px;
}

.section-title h2 {
    font-family: Lato, sans-serif;
    font-size: 64px;
    font-weight: 700;
    line-height: 77px;
    letter-spacing: .5px;
    color: #415055;
}

.section-title h2::after {
    content: "";
    display: block;
    width: 100px;
    height: 6px;
    margin: 36px auto 0;
    background: #4655e8;
}

.info-row {
    display: grid;
    grid-template-columns: 1272px 612px 612px;
    gap: 48px;
}

.info-box {
    height: 337px;
    padding-top: 40px;
    text-align: center;
    background: #fff;
    box-shadow: 0 2px 14px rgba(0, 0, 0, .08);
}

.icon-circle {
    width: 112px;
    height: 112px;
    margin: 0 auto;
    display: flex;
    align-items: center;
    justify-content: center;
    border-radius: 50%;
    color: #4655e8;
    box-shadow: 0 6px 14px rgba(0, 0, 0, .1);
}

.info-box h3 {
    font-family: Lato, sans-serif;
    font-size: 39px;
    font-weight: 700;
    line-height: 48px;
    color: #415055;
    margin-top: 15px;
}

.info-box p {
    font-size: 28px;
    line-height: 42px;
    margin-top: 20px;
}

.lower-row {
    display: grid;
    grid-template-columns: 1272px 1272px;
    gap: 48px;
    margin-top: 56px;
}

/* map */
.map {
    position: relative;
    width: 1200px;
    height: 900px;
    overflow: hidden;
}

.map-canvas {
    display: block;
}

.land { fill: #e7e5de; }
.cream { fill: #f5f2e9; }
.urban { fill: #f6f7f8; }
.park { fill: #c8eed6; }
.park-light { fill: #d8efe2; }
.grey-zone { fill: #e8eaee; }
.tan { fill: #e8e0d2; }
.water { fill: #a3d7e8; }

.q polyline,
.st polyline {
    fill: none;
    vector-effect: non-scaling-stroke;
    stroke-linejoin: round;
    stroke-linecap: round;
}

.st polyline {
    stroke: #dde2ea;
    stroke-width: 2;
}

.q .r1 { stroke: #a8b7d2; stroke-width: 4; }
.q .r2 { stroke: #afbcd4; stroke-width: 3; }
.q .r3 { stroke: #c9cfda; stroke-width: 2; }
.q .red { stroke: #e0483c; stroke-width: 4; stroke-dasharray: 4 6; stroke-linecap: butt; }
.q .dash { stroke: #8a8a86; stroke-width: 1.6; stroke-dasharray: 5 5; stroke-linecap: butt; }

.lbl text {
    font-size: 24px;
    fill: #333;
    stroke: #fff;
    stroke-width: 4px;
    stroke-linejoin: round;
    paint-order: stroke;
    text-anchor: middle;
}

.lbl .alt {
    font-size: 24px;
    font-family: "Noto Sans Kannada", "Noto Sans Tamil", "Noto Sans", Roboto, sans-serif;
}

.lbl .end { text-anchor: end; }
.lbl .start { text-anchor: start; }

.lbl .city {
    font-size: 40px;
    font-weight: 500;
    fill: #222;
}

.lbl .city-alt {
    font-size: 40px;
    font-weight: 700;
    fill: #222;
    font-family: "Noto Sans Kannada", "Noto Sans", Roboto, sans-serif;
}

.lbl .town {
    font-size: 30px;
    font-weight: 500;
    fill: #222;
}

.lbl .town-alt {
    font-size: 32px;
    font-weight: 700;
    fill: #222;
    font-family: "Noto Sans Tamil", "Noto Sans", Roboto, sans-serif;
}

.sh-y use {
    fill: #fdd858;
    stroke: #e8bf4c;
    stroke-width: 1.6;
}

.sh-y text,
.sh-w text {
    font-size: 21px;
    fill: #222;
    text-anchor: middle;
}

.sh-y .far { text-anchor: start; }

.g-logo {
    font-size: 34px;
    font-weight: 500;
    stroke: #fff;
    stroke-width: 3px;
    paint-order: stroke;
}

.place-card {
    position: absolute;
    left: 20px;
    top: 20px;
    width: 603px;
    height: 185px;
    padding: 21px 25px 0;
    background: #fff;
    border-radius: 2px;
    box-shadow: 0 1px 4px rgba(0, 0, 0, .3);
}

.place-top {
    display: flex;
    justify-content: space-between;
    height: 108px;
}

.place-name {
    font-size: 28px;
    font-weight: 500;
    line-height: 32px;
    color: #000;
}

.place-sub {
    font-size: 24px;
    line-height: 28px;
    margin-top: 13px;
    color: #5b5b5b;
}

.directions {
    display: flex;
    flex-direction: column;
    align-items: center;
    gap: 10px;
    margin: 7px 13px 0 0;
    font-size: 24px;
    line-height: 28px;
    color: #1a73e8;
}

.larger-map {
    font-size: 24px;
    line-height: 28px;
    margin-top: 8px;
    color: #1a73e8;
}

.satellite {
    position: absolute;
    left: 20px;
    top: 795px;
    width: 84px;
    height: 84px;
    border: 4px solid #fff;
    border-radius: 4px;
    box-shadow: 0 1px 4px rgba(0, 0, 0, .3);
    overflow: hidden;
}

.satellite svg {
    display: block;
}

.zoom-box {
    position: absolute;
    left: 1100px;
    top: 690px;
    width: 80px;
    height: 162px;
    background: #fff;
    box-shadow: 0 1px 4px rgba(0, 0, 0, .3);
}

.zoom-box svg {
    display: block;
}

.attribution {
    position: absolute;
    right: 0;
    bottom: 0;
    display: flex;
    height: 28px;
    background: rgba(245, 245, 245, .75);
    font-size: 20px;
    line-height: 30px;
    color: #000;
}

.attribution span {
    padding: 0 11px 0 13px;
    border-left: 1px solid rgba(220, 220, 220, .8);
}

.attribution span:first-child {
    border-left: 0;
}

/* form */
.message-form {
    height: 913px;
    padding: 60px;
    display: flex;
    flex-direction: column;
    gap: 48px;
    background: #fff;
    box-shadow: 0 2px 14px rgba(0, 0, 0, .08);
}

.field-row {
    display: grid;
    grid-template-columns: 552px 552px;
    gap: 48px;
}

.message-form input,
.message-form textarea {
    display: block;
    width: 100%;
    padding: 0 30px;
    font-family: Roboto, sans-serif;
    font-size: 28px;
    color: #444;
    border: 2px solid #d8d8d8;
    border-radius: 0;
    background: #fff;
    outline: none;
}

.message-form input {
    height: 86px;
}

.message-box {
    position: relative;
}

.message-form textarea {
    height: 296px;
    padding-top: 20px;
    line-height: 42px;
    resize: none;
}

/* resize grip in the corner of the message box */
.message-box::after {
    content: "";
    position: absolute;
    right: 4px;
    bottom: 5px;
    width: 24px;
    height: 24px;
    background: repeating-linear-gradient(135deg, transparent 0 5px, #777 5px 6.5px);
    clip-path: polygon(100% 0, 100% 100%, 0 100%);
}

.message-form ::placeholder {
    color: #c4c4c4;
    opacity: 1;
}

.form-submit {
    text-align: center;
}

.form-submit button {
    width: 330px;
    height: 88px;
    border: 0;
    border-radius: 100px;
    background: #4655e8;
    color: #fff;
    font-family: Roboto, sans-serif;
    font-size: 32px;
}

.back-to-top {
    position: fixed;
    right: 30px;
    bottom: 30px;
    width: 88px;
    height: 88px;
    display: flex;
    align-items: center;
    justify-content: center;
    border-radius: 50%;
    background: #4655e8;
    color: #fff;
}
```
